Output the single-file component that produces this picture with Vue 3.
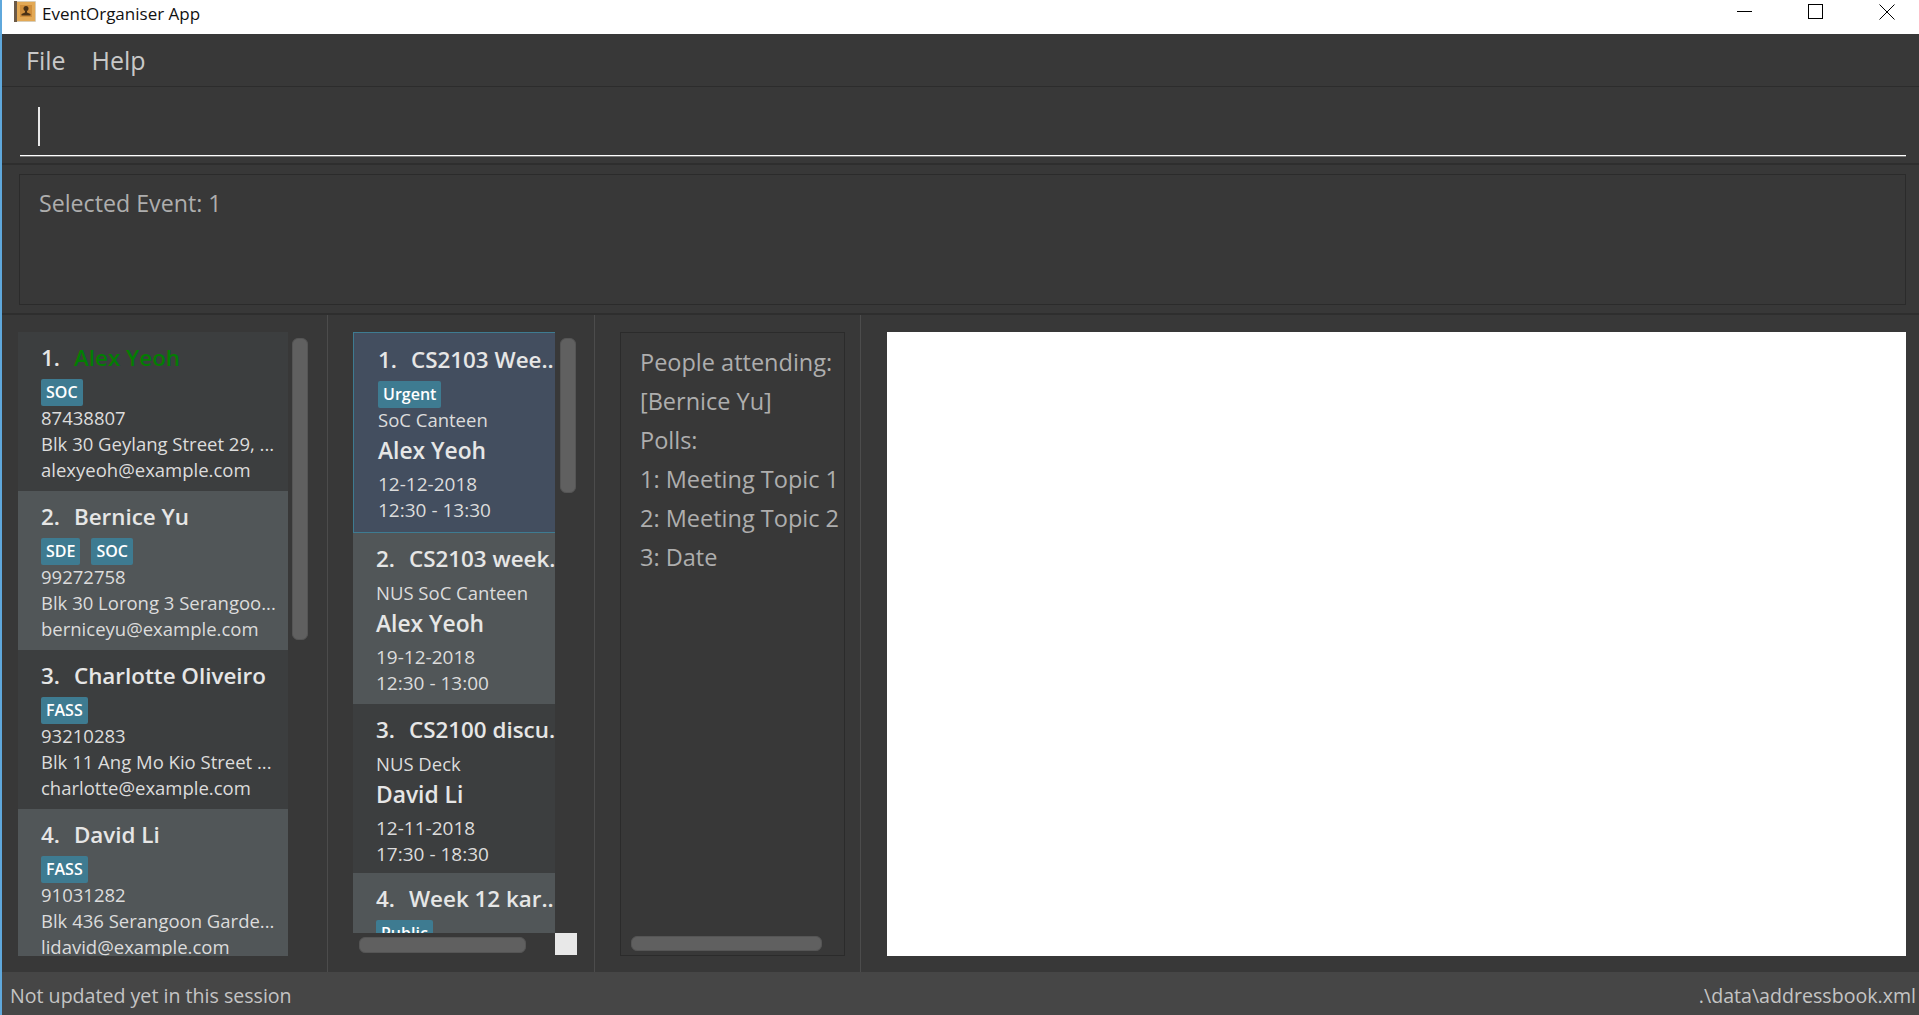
<template>
  <div class="window">
    <div class="title-bar">
      <svg class="app-icon" width="22" height="21" viewBox="0 0 22 21">
        <rect x="0" y="0" width="22" height="21" rx="1" fill="#d8cdb8" />
        <rect x="0" y="0" width="3" height="21" fill="#6b5a48" />
        <rect x="3" y="1" width="18" height="19" fill="#e3a955" />
        <rect x="6" y="4" width="12" height="12" fill="#d08f3c" />
        <circle cx="12" cy="7.5" r="2.5" fill="#4a3216" />
        <path d="M11 9.5h2v2l3.500 1.500v1.500H7.500V13l3.500-1.500z" fill="#4a3216" />
      </svg>
      <span class="app-title">EventOrganiser App</span>
      <div class="win-controls">
        <svg width="16" height="16" viewBox="0 0 16 16"><path d="M0 7.500h15" stroke="#000" fill="none" /></svg>
        <svg width="16" height="16" viewBox="0 0 16 16"><rect x="0.5" y="0.5" width="14" height="14" stroke="#000" fill="none" /></svg>
        <svg width="16" height="16" viewBox="0 0 16 16"><path d="M0.5 0.5l15 15M15.500 0.5l-15 15" stroke="#000" fill="none" /></svg>
      </div>
    </div>

    <div class="menu-bar">
      <span>File</span>
      <span>Help</span>
    </div>

    <div class="command-box">
      <div class="command-input"><span class="caret"></span></div>
    </div>

    <div class="result-section">
      <div class="result-box">Selected Event: 1</div>
    </div>

    <div class="panels">
      <section class="panel person-panel">
        <div class="list">
          <article v-for="(p, i) in persons" :key="p.email" class="card person-card" :class="{ odd: i % 2 === 1 }">
            <div class="card-title">
              <span class="index">{{ i + 1 }}.</span>
              <span :class="{ green: i === 0 }">{{ p.name }}</span>
            </div>
            <div class="tags"><span v-for="t in p.tags" :key="t" class="tag">{{ t }}</span></div>
            <div class="line">{{ p.phone }}</div>
            <div class="line">{{ p.address }}</div>
            <div class="line">{{ p.email }}</div>
          </article>
        </div>
        <div class="v-track"><div class="thumb person-thumb"></div></div>
      </section>

      <section class="panel event-panel">
        <div class="event-col">
          <div class="list event-list">
            <article
              v-for="(e, i) in events"
              :key="e.title"
              class="card event-card"
              :class="{ odd: i % 2 === 1, selected: i === 0 }"
            >
              <div class="card-title">
                <span class="index">{{ i + 1 }}.</span>
                <span>{{ e.title }}</span>
              </div>
              <div v-if="e.tags.length" class="tags"><span v-for="t in e.tags" :key="t" class="tag">{{ t }}</span></div>
              <div class="line">{{ e.venue }}</div>
              <div class="organiser">{{ e.organiser }}</div>
              <div class="line date">{{ e.date }}</div>
              <div class="line time">{{ e.time }}</div>
            </article>
          </div>
          <div class="h-track"><div class="thumb event-h-thumb"></div></div>
        </div>
        <div class="event-side">
          <div class="v-track"><div class="thumb event-thumb"></div></div>
          <div class="corner"></div>
        </div>
      </section>

      <section class="panel detail-panel">
        <div class="detail-box">
          <div class="detail-lines">
            <div v-for="l in details" :key="l">{{ l }}</div>
          </div>
          <div class="thumb detail-thumb"></div>
        </div>
      </section>

      <section class="panel browser-panel">
        <div class="browser"></div>
      </section>
    </div>

    <div class="status-bar">
      <span>Not updated yet in this session</span>
      <span>.\data\addressbook.xml</span>
    </div>
  </div>
</template>

<script setup>
const persons = [
  { name: 'Alex Yeoh', tags: ['SOC'], phone: '87438807', address: 'Blk 30 Geylang Street 29, ...', email: 'alexyeoh@example.com' },
  { name: 'Bernice Yu', tags: ['SDE', 'SOC'], phone: '99272758', address: 'Blk 30 Lorong 3 Serangoo...', email: 'berniceyu@example.com' },
  { name: 'Charlotte Oliveiro', tags: ['FASS'], phone: '93210283', address: 'Blk 11 Ang Mo Kio Street ...', email: 'charlotte@example.com' },
  { name: 'David Li', tags: ['FASS'], phone: '91031282', address: 'Blk 436 Serangoon Garde...', email: 'lidavid@example.com' }
]

const events = [
  { title: 'CS2103 Wee..', tags: ['Urgent'], venue: 'SoC Canteen', organiser: 'Alex Yeoh', date: '12-12-2018', time: '12:30 - 13:30' },
  { title: 'CS2103 week.', tags: [], venue: 'NUS SoC Canteen', organiser: 'Alex Yeoh', date: '19-12-2018', time: '12:30 - 13:00' },
  { title: 'CS2100 discu.', tags: [], venue: 'NUS Deck', organiser: 'David Li', date: '12-11-2018', time: '17:30 - 18:30' },
  { title: 'Week 12 kar..', tags: ['Public'], venue: '', organiser: '', date: '', time: '' }
]

const details = ['People attending:', '[Bernice Yu]', 'Polls:', '1: Meeting Topic 1', '2: Meeting Topic 2', '3: Date']
</script>

<style>
html, body {
  margin: 0;
  overflow: hidden;
  background: #383838;
}
</style>

<style scoped>
.window {
  width: 1919px;
  height: 1015px;
  box-sizing: border-box;
  display: flex;
  flex-direction: column;
  border-left: 2px solid #5fa8dc;
  background: #383838;
  font-family: "Open Sans", "Noto Sans", sans-serif;
  overflow: hidden;
}

.title-bar {
  height: 34px;
  flex: none;
  box-sizing: border-box;
  display: flex;
  align-items: center;
  background: #fff;
  padding: 0 0 11px 12px;
  color: #111;
  font-size: 17px;
}

.app-icon {
  margin-right: 6px;
}

.app-title {
  margin-top: 3px;
}

.win-controls {
  margin-left: auto;
  display: flex;
  gap: 55px;
  padding-right: 24px;
}

.menu-bar {
  height: 53px;
  flex: none;
  box-sizing: border-box;
  display: flex;
  align-items: center;
  gap: 26px;
  padding-left: 24px;
  border-bottom: 1px solid #2c2c2c;
  color: #c8c8c8;
  font-size: 25px;
}

.command-box {
  height: 78px;
  flex: none;
  box-sizing: border-box;
  padding: 0 13px 0 18px;
  border-bottom: 2px solid #2e2e2e;
}

.command-input {
  height: 69px;
  box-sizing: border-box;
  border-bottom: 1px solid #fff;
  box-shadow: 0 1px 0 #777;
  padding: 20px 0 0 18px;
}

.caret {
  display: block;
  width: 2px;
  height: 39px;
  background: #e8e8e8;
}

.result-section {
  height: 150px;
  flex: none;
  box-sizing: border-box;
  padding: 9px 13px 8px 17px;
  border-bottom: 2px solid #2e2e2e;
}

.result-box {
  height: 131px;
  box-sizing: border-box;
  border: 1px solid #2b2b2b;
  padding: 12px 19px;
  color: #aeaeae;
  font-size: 23.2px;
}

.panels {
  flex: 1;
  min-height: 0;
  display: flex;
}

.panel {
  box-sizing: border-box;
  display: flex;
  min-height: 0;
  padding-top: 17px;
  padding-bottom: 16px;
  border-right: 1px solid #4c4c4c;
}

.person-panel {
  width: 326px;
  padding-left: 16px;
  padding-right: 19px;
  gap: 4px;
}

.list {
  width: 270px;
  overflow: hidden;
  flex: none;
}

.card {
  background: #3c3e3f;
  box-sizing: border-box;
  color: #dcdcdc;
  overflow: hidden;
  white-space: nowrap;
}

.card.odd {
  background: #515658;
}

.person-card {
  height: 159px;
  padding: 10px 0 0 23px;
}

.card-title {
  display: flex;
  gap: 14px;
  height: 32px;
  line-height: 32px;
  font-size: 22.4px;
  font-weight: 600;
  color: #e6e6e6;
}

.green {
  color: #037d03;
}

.tags {
  display: flex;
  gap: 11px;
  height: 26px;
  margin-top: 5px;
}

.tag {
  flex: none;
  background: #3e7b91;
  color: #fff;
  height: 27px;
  line-height: 27px;
  padding: 0 5px;
  border-radius: 2px;
  font-size: 16px;
  font-weight: 600;
}

.line {
  height: 26px;
  line-height: 26px;
  font-size: 18.5px;
}

.v-track {
  width: 16px;
  flex: none;
  padding-top: 6px;
}

.thumb {
  background: #606060;
  border: 1px solid #555;
  box-sizing: border-box;
  border-radius: 6px;
}

.person-thumb {
  height: 302px;
}

.event-panel {
  width: 267px;
  padding-left: 25px;
  padding-right: 17px;
}

.event-col {
  width: 202px;
  flex: none;
  display: flex;
  flex-direction: column;
}

.event-list {
  width: 202px;
  height: 601px;
}

.event-card {
  height: 170px;
  padding: 10px 0 0 23px;
}

.event-card:nth-child(2) {
  height: 171px;
}

.event-card:nth-child(3) {
  height: 169px;
}

.event-card.selected {
  width: 210px;
  height: 201px;
  padding: 11px 0 0 24px;
  background: #434e5f;
  border: 1px solid #3e7b91;
}

.event-card .card-title + .line {
  margin-top: 5px;
}

.organiser {
  height: 32px;
  line-height: 32px;
  margin-top: 2px;
  font-size: 22.8px;
  font-weight: 600;
  color: #e6e6e6;
}

.date {
  margin-top: 4px;
}

.date,
.time {
  font-size: 19px;
}

.h-track {
  padding: 4px 29px 0 6px;
}

.event-h-thumb {
  height: 16px;
}

.event-side {
  width: 22px;
  flex: none;
  display: flex;
  flex-direction: column;
}

.event-side .v-track {
  width: 21px;
  height: 601px;
  padding-left: 5px;
  box-sizing: border-box;
}

.event-thumb {
  height: 155px;
}

.corner {
  width: 22px;
  height: 22px;
  background: #e8e8e8;
}

.detail-panel {
  width: 266px;
  padding-left: 25px;
  padding-right: 15px;
}

.detail-box {
  flex: 1;
  box-sizing: border-box;
  border: 1px solid #2b2b2b;
  padding: 10px 0 4px 19px;
  display: flex;
  flex-direction: column;
  overflow: hidden;
  color: #aeaeae;
  font-size: 23.5px;
  line-height: 39px;
  white-space: nowrap;
}

.detail-lines {
  flex: 1;
}

.detail-thumb {
  width: 191px;
  height: 15px;
  margin-left: -9px;
}

.browser-panel {
  flex: 1;
  padding-left: 26px;
  padding-right: 13px;
  border-right: none;
}

.browser {
  flex: 1;
  background: #fff;
}

.status-bar {
  height: 43px;
  flex: none;
  box-sizing: border-box;
  display: flex;
  justify-content: space-between;
  align-items: center;
  padding: 4px 3px 0 8px;
  background: #464646;
  color: #c4c4c4;
  font-size: 19.6px;
}
</style>
